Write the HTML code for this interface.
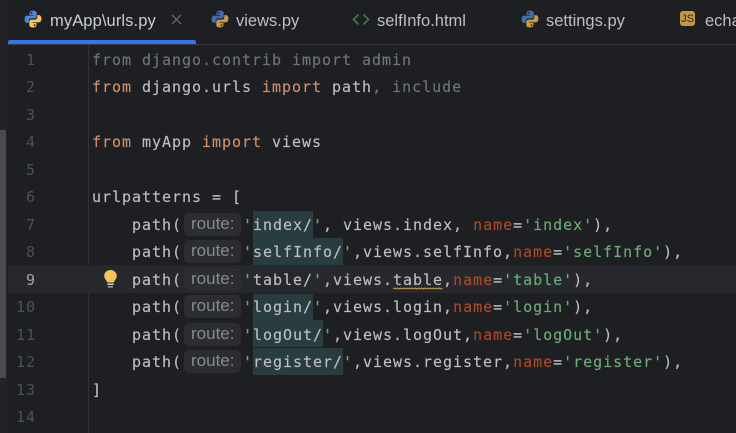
<!DOCTYPE html>
<html><head><meta charset="utf-8">
<style>
html,body{margin:0;padding:0;background:#1e1f22;}
#r{position:relative;width:736px;height:433px;overflow:hidden;background:#1e1f22;}
.a{position:absolute;}
.t{position:absolute;top:10px;font:16.5px/22px "Liberation Sans",sans-serif;color:#bcbec4;white-space:pre;}
.n{position:absolute;width:36px;text-align:right;left:0;font:15px/22px "DejaVu Sans Mono",monospace;color:#4b5059;letter-spacing:.97px;}
.l{position:absolute;left:92px;font:15px/22px "DejaVu Sans Mono",monospace;letter-spacing:.97px;color:#bcbec4;white-space:pre;-webkit-text-stroke:.15px currentColor;}
.k{color:#cf8e6d}.s{color:#6aab73}.p{color:#aa4926}.g{color:#6f737a}.u{color:#5f6268}
.h{position:absolute;left:184px;width:57px;height:23px;background:#2b2d30;border-radius:5px;color:#868a91;font:17px/21px "Liberation Sans",sans-serif;text-indent:7px;}
.b{position:absolute;height:27px;background:#293c40;left:253px;}
svg{position:absolute;}
</style></head><body><div id="r">
<svg width="0" height="0"><defs>
<g id="py"><path fill="var(--c1)" d="M8.1 .5C5.6 .5 4.9 1.5 4.9 2.8V4.4H8.3V5H3C1.5 5 .5 6 .5 8.2S1.5 11.5 2.9 11.5H4.2V9.6C4.2 8.3 5.2 7.4 6.4 7.4H9.6C10.7 7.4 11.3 6.6 11.3 5.6V2.8C11.3 1.4 10.3 .5 8.1 .5Z"/><path fill="var(--c2)" d="M7.9 15.5C10.4 15.5 11.1 14.5 11.1 13.2V11.6H7.7V11H13C14.5 11 15.5 10 15.5 7.8S14.5 4.5 13.1 4.5H11.8V6.4C11.8 7.7 10.8 8.6 9.6 8.6H6.4C5.3 8.6 4.7 9.4 4.7 10.4V13.2C4.7 14.6 5.7 15.5 7.9 15.5Z"/><circle cx="6.6" cy="2.5" r=".8" fill="#1e1f22"/><circle cx="9.4" cy="13.5" r=".8" fill="#1e1f22"/></g>
</defs></svg>

<div class="a" style="left:0;top:0;width:7px;height:433px;background:#222327"></div>
<div class="a" style="left:0;top:130px;width:6px;height:248px;background:#4a4b4e"></div>
<div class="a" style="left:8px;top:44px;width:728px;height:1px;background:#393b40"></div>
<div class="a" style="left:8px;top:40px;width:188px;height:4px;background:#3574f0;border-radius:2px 2px 0 0"></div>
<div class="a" style="left:88px;top:45px;width:1px;height:388px;background:#313338"></div>
<div class="a" style="left:8px;top:265px;width:728px;height:28px;background:#26282e"></div>

<svg style="left:24px;top:10px;--c1:#4f86d6;--c2:#f4c75e" width="18" height="18" viewBox="0 0 16 16"><use href="#py"/></svg>
<div class="t" style="left:50px;color:#c9ccd2;letter-spacing:.1px">myApp\urls.py</div>
<svg style="left:171px;top:14px" width="11" height="11" viewBox="0 0 11 11"><path d="M1 1L10 10M10 1L1 10" stroke="#6f737a" stroke-width="1.2" fill="none"/></svg>
<svg style="left:211px;top:10px;--c1:#3f6db0;--c2:#c49a45" width="18" height="18" viewBox="0 0 16 16"><use href="#py"/></svg>
<div class="t" style="left:236px">views.py</div>
<svg style="left:352px;top:13px" width="18" height="13" viewBox="0 0 18 13"><path d="M6.5 1.5L1.5 6.5L6.5 11.5M11.5 1.5L16.5 6.5L11.5 11.5" stroke="#3f7a45" stroke-width="1.6" fill="none"/></svg>
<div class="t" style="left:377px">selfInfo.html</div>
<svg style="left:521px;top:10px;--c1:#3f6db0;--c2:#c49a45" width="18" height="18" viewBox="0 0 16 16"><use href="#py"/></svg>
<div class="t" style="left:546px">settings.py</div>
<div class="a" style="left:680px;top:11px;width:15px;height:15px;background:#c49a45;border-radius:3px;color:#2b2420;font:11px/16px 'Liberation Sans',sans-serif;text-align:center">JS</div>
<div class="t" style="left:705px">echa</div>

<div class="n" style="top:49px">1</div>
<div class="n" style="top:76px">2</div>
<div class="n" style="top:104px">3</div>
<div class="n" style="top:131px">4</div>
<div class="n" style="top:159px">5</div>
<div class="n" style="top:186px">6</div>
<div class="n" style="top:214px">7</div>
<div class="n" style="top:241px">8</div>
<div class="n" style="top:269px;color:#a1a3ab">9</div>
<div class="n" style="top:296px">10</div>
<div class="n" style="top:324px">11</div>
<div class="n" style="top:351px">12</div>
<div class="n" style="top:379px">13</div>
<div class="n" style="top:406px">14</div>

<div class="l g" style="top:49px">from django.contrib import admin</div>
<div class="l" style="top:76px"><span class="k">from</span> django.urls <span class="k">import</span> path<span class="g">, include</span></div>
<div class="l" style="top:131px"><span class="k">from</span> myApp <span class="k">import</span> views</div>
<div class="l" style="top:186px">urlpatterns = [</div>

<div class="b" style="top:211px;width:60px"></div>
<div class="b" style="top:238px;width:90px"></div>
<div class="b" style="top:294px;width:60px"></div>
<div class="b" style="top:320px;width:70px"></div>
<div class="b" style="top:348px;width:90px;"></div>

<div class="h" style="top:213px">route:</div>
<div class="h" style="top:240px">route:</div>
<div class="h" style="top:268px">route:</div>
<div class="h" style="top:295px">route:</div>
<div class="h" style="top:323px">route:</div>
<div class="h" style="top:350px">route:</div>

<div class="l" style="top:214px">    path(</div><div class="l" style="top:214px;left:243px"><span class="s">'</span>index/<span class="s">'</span>, views.index, <span class="p">name</span>=<span class="s">'index'</span>),</div>
<div class="l" style="top:241px">    path(</div><div class="l" style="top:241px;left:243px"><span class="s">'</span>selfInfo/<span class="s">'</span>,views.selfInfo,<span class="p">name</span>=<span class="s">'selfInfo'</span>),</div>
<div class="l" style="top:269px">    path(</div><div class="l" style="top:269px;left:243px"><span class="s">'</span>table/<span class="s">'</span>,views.table,<span class="p">name</span>=<span class="s">'table'</span>),</div>
<div class="l" style="top:296px">    path(</div><div class="l" style="top:296px;left:243px"><span class="s">'</span>login/<span class="s">'</span>,views.login,<span class="p">name</span>=<span class="s">'login'</span>),</div>
<div class="l" style="top:324px">    path(</div><div class="l" style="top:324px;left:243px"><span class="s">'</span>logOut/<span class="s">'</span>,views.logOut,<span class="p">name</span>=<span class="s">'logOut'</span>),</div>
<div class="l" style="top:351px">    path(</div><div class="l" style="top:351px;left:243px"><span class="s">'</span>register/<span class="s">'</span>,views.register,<span class="p">name</span>=<span class="s">'register'</span>),</div>
<div class="l" style="top:379px">]</div>

<svg style="left:393px;top:287px" width="50" height="3" viewBox="0 0 50 3"><path d="M0 2L1.5 1L3 2L4.5 1L6 2L7.5 1L9 2L10.5 1L12 2L13.5 1L15 2L16.5 1L18 2L19.5 1L21 2L22.5 1L24 2L25.5 1L27 2L28.5 1L30 2L31.5 1L33 2L34.5 1L36 2L37.5 1L39 2L40.5 1L42 2L43.5 1L45 2L46.5 1L48 2L49.5 1" stroke="#c9a34a" stroke-width="1" fill="none"/></svg>

<svg style="left:103px;top:269px" width="15" height="20" viewBox="0 0 15 20"><path fill="#f2c55c" d="M7.5 1C3.8 1 1.2 3.6 1.2 6.9C1.2 9.6 3.4 11 4.2 13.5H10.8C11.6 11 13.8 9.6 13.8 6.9C13.8 3.6 11.2 1 7.5 1Z"/><rect x="4.3" y="14.5" width="6.4" height="1.5" fill="#c9ccd2"/><rect x="5" y="17" width="5" height="1.6" fill="#9a9da3"/></svg>
</div></body></html>
